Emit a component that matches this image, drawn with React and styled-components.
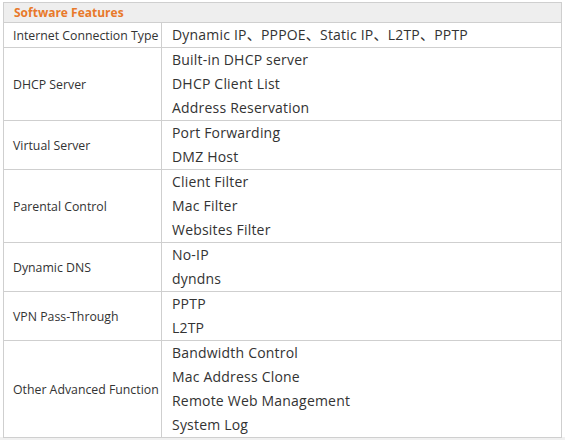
import React from "react";
import styled, { createGlobalStyle } from "styled-components";

const GlobalStyle = createGlobalStyle`
  html, body {
    margin: 0;
    padding: 0;
    background: #fff;
  }
  body {
    font-family: "Open Sans", "Noto Sans CJK SC", sans-serif;
    color: #333;
  }
`;

const rows = [
  { label: "Internet Connection Type", items: ["Dynamic IP、PPPOE、Static IP、L2TP、PPTP"] },
  { label: "DHCP Server", items: ["Built-in DHCP server", "DHCP Client List", "Address Reservation"] },
  { label: "Virtual Server", items: ["Port Forwarding", "DMZ Host"] },
  { label: "Parental Control", items: ["Client Filter", "Mac Filter", "Websites Filter"] },
  { label: "Dynamic DNS", items: ["No-IP", "dyndns"] },
  { label: "VPN Pass-Through", items: ["PPTP", "L2TP"] },
  {
    label: "Other Advanced Function",
    items: ["Bandwidth Control", "Mac Address Clone", "Remote Web Management", "System Log"],
  },
];

const Page = styled.div`
  padding: 2px 0 0 3px;
  width: 565px;
  height: 440px;
  box-sizing: border-box;
  background: linear-gradient(#fff 437px, #f0f0f0 437px);
`;

const Table = styled.table`
  border-collapse: collapse;
  width: 559px;
  background: #fff;
  td {
    border: 1px solid #cfcfcf;
    padding: 0;
  }
`;

const HeadCell = styled.td`
  background: #eeeeee;
  color: #e8792a;
  font-weight: bold;
  font-size: 12px;
  height: 19px;
  padding: 0 10px !important;
  line-height: 18px;
`;

const Label = styled.td`
  width: 148px;
  padding: 0 0 0 9px !important;
  font-size: 12.3px;
  vertical-align: middle;
  white-space: nowrap;
  color: #333;
`;

const Values = styled.td`
  padding: 0 0 0 10px !important;
  font-size: 14px;
  letter-spacing: 0.2px;
  color: #333;
  vertical-align: top;
`;

const Line = styled.div`
  height: 24px;
  line-height: 24px;
  white-space: nowrap;
`;

export default function App() {
  return (
    <>
      <GlobalStyle />
      <Page>
        <Table>
          <tbody>
            <tr>
              <HeadCell colSpan={2}>Software Features</HeadCell>
            </tr>
            {rows.map((row) => (
              <tr key={row.label}>
                <Label>{row.label}</Label>
                <Values>
                  {row.items.map((item) => (
                    <Line key={item}>{item}</Line>
                  ))}
                </Values>
              </tr>
            ))}
          </tbody>
        </Table>
      </Page>
    </>
  );
}
